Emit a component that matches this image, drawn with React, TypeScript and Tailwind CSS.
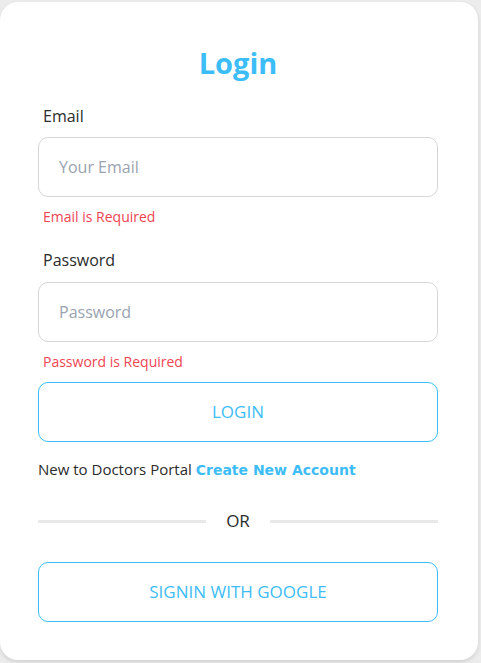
export default function App() {
  const font = { fontFamily: '"Open Sans", "Noto Sans", sans-serif' };
  return (
    <div className="min-h-[663px] w-[481px] bg-[#ececec] pt-[2px]" style={font}>
      <div className="w-[478px] h-[658px] bg-white rounded-[18px] shadow-[0_2px_4px_rgba(0,0,0,0.12)] pl-[38px] pr-[40px] pt-[43px] flex flex-col">
        <h2 className="h-9 leading-9 text-center text-[29px] font-bold text-[#3dbdf8]">Login</h2>
        <label className="mt-[23px] pl-[5px] h-6 leading-6 text-[16px] text-[#2b2b2b]">Email</label>
        <input
          className="mt-[9px] h-[60px] w-full rounded-[10px] border border-[#d6d6d6] px-[20px] text-[16px] placeholder:text-[#9aa3b0] outline-none"
          placeholder="Your Email"
        />
        <p className="mt-[10px] pl-[5px] h-5 leading-5 text-[14px] text-[#ef4452]">Email is Required</p>
        <label className="mt-[21px] pl-[5px] h-6 leading-6 text-[16px] text-[#2b2b2b]">Password</label>
        <input
          type="password"
          className="mt-[10px] h-[60px] w-full rounded-[10px] border border-[#d6d6d6] px-[20px] text-[16px] placeholder:text-[#9aa3b0] outline-none"
          placeholder="Password"
        />
        <p className="mt-[10px] pl-[5px] h-5 leading-5 text-[14px] text-[#ef4452]">Password is Required</p>
        <button className="mt-[10px] h-[60px] w-full rounded-[10px] border border-[#3dbdf8] text-[17px] font-medium text-[#3dbdf8]">
          LOGIN
        </button>
        <p className="mt-[17px] h-5 leading-5 text-[15px] text-[#2b2b2b]">
          New to Doctors Portal{" "}
          <a className="font-bold text-[#3dbdf8]" style={{ fontFamily: '"DejaVu Sans", sans-serif', fontSize: "14px" }}>
            Create New Account
          </a>
        </p>
        <div className="mt-[30px] h-6 flex items-center gap-[20px]">
          <div className="flex-1 h-[3px] bg-[#e8e8e8]" />
          <span className="text-[17px] leading-6 text-[#2b2b2b]">OR</span>
          <div className="flex-1 h-[3px] bg-[#e8e8e8]" />
        </div>
        <button className="mt-[29px] h-[60px] w-full rounded-[10px] border border-[#3dbdf8] text-[17px] font-medium text-[#3dbdf8]">
          SIGNIN WITH GOOGLE
        </button>
      </div>
    </div>
  );
}
